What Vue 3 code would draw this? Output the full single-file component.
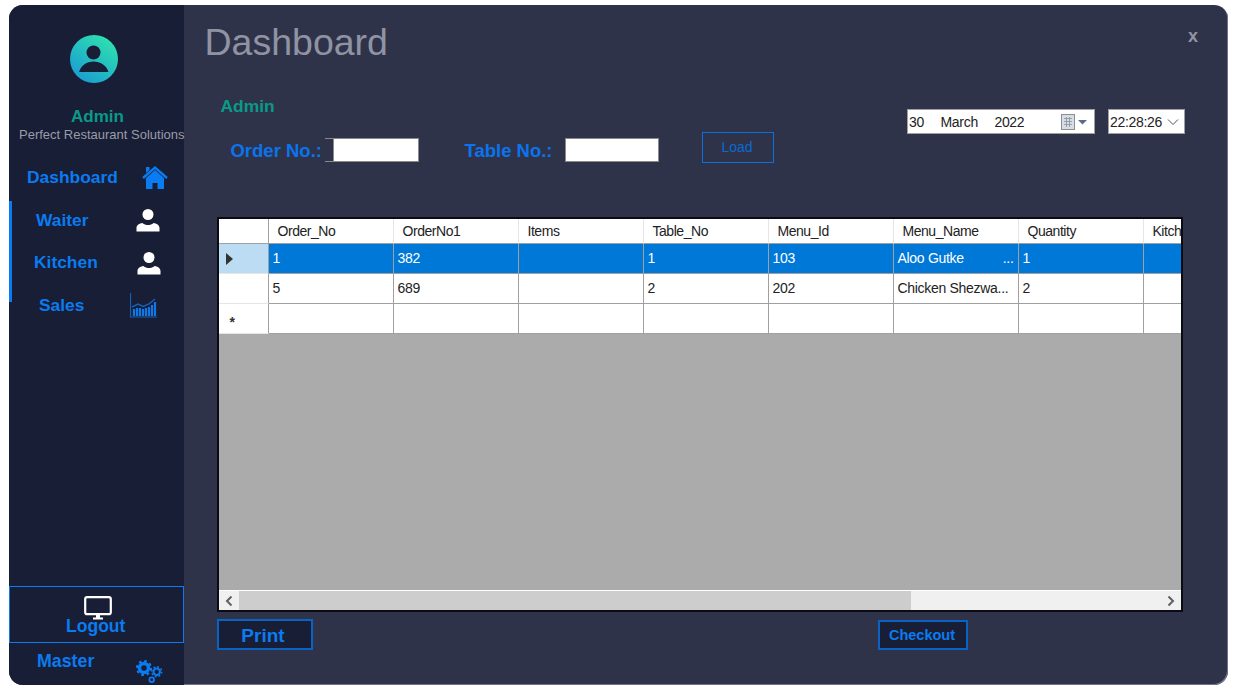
<template>
  <div class="window">
    <aside class="sidebar">
      <svg class="avatar" viewBox="0 0 48 48">
        <defs>
          <linearGradient id="avatarFill" x1="0.85" y1="0.05" x2="0.2" y2="0.95">
            <stop offset="0" stop-color="#30e2ae" />
            <stop offset="1" stop-color="#1a9dd2" />
          </linearGradient>
        </defs>
        <circle cx="24" cy="24" r="24" fill="url(#avatarFill)" />
        <circle cx="23.500" cy="17.500" r="7" fill="#181e35" />
        <path d="M9 37c2-6.500 8-10.500 14.500-10.500S36.500 30.500 38.500 37z" fill="#181e35" />
      </svg>
      <div class="who">Admin</div>
      <div class="company">Perfect Restaurant Solutions</div>

      <div class="nav-row first">
        <span class="nav-label">Dashboard</span>
        <svg class="home" viewBox="0 0 26 24">
          <path d="M1 13 13 2.500 25 13" fill="none" stroke="#0a7bf0" stroke-width="2.400" />
          <path d="M4 2h3.500v3l-3.500 3z" fill="#0a7bf0" />
          <path d="M13 5 4 13v11h6.500v-6h5v6H22V13z" fill="#0a7bf0" />
        </svg>
      </div>
      <div class="nav-group">
        <div class="nav-row waiter">
          <span class="nav-label">Waiter</span>
          <svg class="person" viewBox="0 0 24 24">
            <circle cx="12" cy="6.500" r="5.500" fill="#fff" />
            <path d="M0.500 23.500V20c0-3 3-4.500 6-5 1.500 1.500 3.500 2 5.500 2s4-0.500 5.500-2c3 0.500 6 2 6 5v3.500z" fill="#fff" />
          </svg>
        </div>
        <div class="nav-row kitchen">
          <span class="nav-label">Kitchen</span>
          <svg class="person" viewBox="0 0 24 24">
            <circle cx="12" cy="6.500" r="5.500" fill="#fff" />
            <path d="M0.500 23.500V20c0-3 3-4.500 6-5 1.500 1.500 3.500 2 5.500 2s4-0.500 5.500-2c3 0.500 6 2 6 5v3.500z" fill="#fff" />
          </svg>
        </div>
        <div class="nav-row sales">
          <span class="nav-label">Sales</span>
          <svg class="chart" viewBox="0 0 27 25">
            <path d="M0.500 0v24H27" fill="none" stroke="#1560b8" stroke-width="1.200" />
            <path d="M2 14l6-3 5 2.500 6-2.500 6-5" fill="none" stroke="#1560b8" stroke-width="1.400" />
            <path d="M4 23v-7M7 23v-8M10 23v-8M13 23v-7M16 23v-8M19 23v-9M22 23v-11M25 23v-14" stroke="#0f78e8" stroke-width="2.200" />
          </svg>
        </div>
      </div>

      <div class="logout">
        <svg class="monitor" viewBox="0 0 28 24">
          <rect x="1.200" y="1.200" width="25.600" height="17" rx="2" fill="none" stroke="#fff" stroke-width="2.200" />
          <path d="M12 19h4v2.500h-4zM9 21.500h10v2H9z" fill="#fff" />
        </svg>
        <span class="nav-label">Logout</span>
      </div>
      <div class="nav-row master">
        <span class="nav-label">Master</span>
        <svg class="gears" viewBox="0 0 27 24">
          <g fill="none" stroke="#0a7bf0">
            <circle cx="8" cy="8" r="4.500" stroke-width="3.500" />
            <circle cx="8" cy="8" r="7" stroke-width="2.200" stroke-dasharray="2.700 2.800" />
            <circle cx="20.700" cy="11.700" r="3.200" stroke-width="2" />
            <circle cx="20.700" cy="11.700" r="5" stroke-width="1.500" stroke-dasharray="1.900 2" />
            <circle cx="15.700" cy="19.700" r="2.300" stroke-width="1.800" />
          </g>
        </svg>
      </div>
    </aside>

    <main class="main">
      <header class="top">
        <h1>Dashboard</h1>
        <span class="close">x</span>
      </header>

      <section class="filters">
        <div class="filters-left">
          <div class="user">Admin</div>
          <div class="order-row">
            <label class="field-label order-label">Order No.:</label>
            <div class="field order-field"><input type="text" /></div>
            <label class="field-label table-label">Table No.:</label>
            <div class="field table-field"><input type="text" /></div>
            <button class="load">Load</button>
          </div>
        </div>
        <div class="filters-right">
          <div class="picker date">
            <span>30</span><span>March</span><span>2022</span>
            <svg class="cal" viewBox="0 0 26 16">
              <rect x="0.500" y="0.500" width="13" height="15" fill="#d8dde3" stroke="#8a8f96" />
              <path d="M3 4.500h8M3 7.500h8M3 10.500h8M5.500 3v10M8.500 3v10" stroke="#8f9aa8" stroke-width="0.900" />
              <path d="M17 6h9l-4.500 4.500z" fill="#5a6c8c" />
            </svg>
          </div>
          <div class="picker time">
            <span>22:28:26</span>
            <svg class="chev" viewBox="0 0 12 8"><path d="M1 1.500l5 5 5-5" fill="none" stroke="#555" /></svg>
          </div>
        </div>
      </section>

      <section class="grid">
        <div class="grid-view">
          <table>
            <colgroup>
              <col class="rowhead-col" />
              <col v-for="c in columns" :key="c" class="data-col" />
            </colgroup>
            <thead>
              <tr>
                <th class="rowhead"></th>
                <th v-for="c in columns" :key="c">{{ c }}</th>
              </tr>
            </thead>
            <tbody>
              <tr class="selected">
                <td class="rowhead"><span class="arrow"></span></td>
                <td v-for="(v, i) in rows[0]" :key="i">
                  <div v-if="i === 5" class="clip"><span>{{ v }}</span><span>...</span></div>
                  <template v-else>{{ v }}</template>
                </td>
              </tr>
              <tr>
                <td class="rowhead"></td>
                <td v-for="(v, i) in rows[1]" :key="i">{{ v }}</td>
              </tr>
              <tr>
                <td class="rowhead"><span class="star">*</span></td>
                <td v-for="c in columns" :key="c"></td>
              </tr>
            </tbody>
          </table>
        </div>
        <div class="scrollbar">
          <span class="scroll-btn">
            <svg viewBox="0 0 10 12"><path d="M7.500 1.500 3 6l4.500 4.500" fill="none" stroke="#606060" stroke-width="2" /></svg>
          </span>
          <span class="thumb"></span>
          <span class="scroll-btn end">
            <svg viewBox="0 0 10 12"><path d="M2.500 1.500 7 6l-4.500 4.500" fill="none" stroke="#606060" stroke-width="2" /></svg>
          </span>
        </div>
      </section>

      <footer class="actions">
        <button class="print">Print</button>
        <button class="checkout">Checkout</button>
      </footer>
    </main>
  </div>
</template>

<script setup>
const columns = ['Order_No', 'OrderNo1', 'Items', 'Table_No', 'Menu_Id', 'Menu_Name', 'Quantity', 'Kitchen']
const rows = [
  ['1', '382', '', '1', '103', 'Aloo Gutke', '1', ''],
  ['5', '689', '', '2', '202', 'Chicken Shezwa...', '2', '']
]
</script>

<style>
html, body { background: #fff; }
</style>

<style scoped>
.window {
  display: flex;
  width: 1219px;
  height: 680px;
  margin: 5px 0 0 9px;
  border-radius: 14px;
  overflow: hidden;
  background: #2f3349;
  font-family: "Liberation Sans", Arial, sans-serif;
  box-shadow: inset -1px -1px 0 #70748a;
}
.sidebar {
  display: flex;
  flex-direction: column;
  flex: 0 0 175px;
  padding-top: 30px;
  background: #181e35;
  box-sizing: border-box;
}
.avatar {
  width: 48px;
  height: 48px;
  margin-left: 61px;
}
.who {
  margin-top: 23px;
  margin-left: 62px;
  font-size: 17px;
  line-height: 22px;
  font-weight: 700;
  color: #0a9a88;
}
.company {
  margin-left: 10px;
  margin-top: -1px;
  font-size: 13px;
  line-height: 16px;
  color: #9a9ca8;
  white-space: nowrap;
}
.nav-row {
  display: flex;
  align-items: center;
  justify-content: space-between;
  height: 42.5px;
  box-sizing: border-box;
}
.nav-label {
  font-size: 17.400px;
  font-weight: 700;
  color: #0a7bf0;
}
.first {
  margin-top: 13px;
  height: 42px;
  padding: 0 16px 0 18px;
  margin-bottom: 1px;
}
.nav-group {
  position: relative;
}
.nav-group::before {
  content: "";
  position: absolute;
  left: 0;
  top: 2px;
  width: 3px;
  height: 101px;
  background: #0a7bf0;
}
.waiter { padding: 0 24px 0 27px; }
.kitchen { padding: 0 23px 0 25px; }
.sales { padding: 0 27px 0 30px; }
.home { width: 26px; height: 24px; }
.person { width: 24px; height: 24px; }
.chart { width: 27px; height: 25px; }
.logout {
  display: flex;
  flex-direction: column;
  align-items: center;
  height: 57px;
  margin-top: auto;
  padding-top: 9px;
  box-sizing: border-box;
  border: 1px solid #0a7bf0;
}
.logout .nav-label { margin: -5px 2px 0 0; line-height: 22px; font-size: 17.500px; }
.monitor { width: 28px; height: 24px; flex: none; margin-left: 3px; }
.master {
  height: 42px;
  padding: 0 21px 0 28px;
  align-items: flex-start;
}
.master .nav-label { margin-top: 8px; font-size: 17.800px; }
.gears { width: 27px; height: 24px; margin-top: 17px; overflow: visible; }

.main {
  flex: 1;
  display: flex;
  flex-direction: column;
  padding: 0 45px 0 33px;
  min-width: 0;
}
.top {
  display: flex;
  justify-content: space-between;
  height: 76px;
  margin-left: -13px;
  margin-right: -15px;
}
h1 {
  margin: 14px 0 0;
  font-size: 37.500px;
  line-height: 46px;
  font-weight: 400;
  color: #8f93a3;
}
.close {
  margin-top: 20px;
  font-size: 18px;
  line-height: 22px;
  font-weight: 700;
  color: #8f93a3;
}
.filters {
  display: flex;
  justify-content: space-between;
  height: 136px;
}
.user {
  margin-left: 3px;
  margin-top: 14px;
  font-size: 17.400px;
  line-height: 22px;
  font-weight: 700;
  color: #0a9a88;
}
.order-row {
  display: flex;
  align-items: center;
  margin-top: 15px;
  height: 31px;
}
.field-label {
  margin-top: 6px;
  margin-left: -1px;
  font-size: 18.500px;
  font-weight: 700;
  color: #0a74ee;
  white-space: nowrap;
}
.order-label { width: 95px; margin-left: 13px; }
.table-label { width: 101px; margin-left: 45px; }
.field {
  display: flex;
  width: 94px;
  height: 24px;
  margin-top: 5px;
  box-sizing: border-box;
  border: 1px solid #8a8a8a;
}
.order-field {
  padding-left: 8px;
  border-left: 0;
}
.field input {
  width: 100%;
  min-width: 0;
  padding: 0;
  border: 0;
  background: #fff;
}
.order-field input { border-left: 1px solid #8a8a8a; }
.load {
  width: 72px;
  height: 31px;
  margin-left: 43px;
  padding: 0 3px 2px 0;
  border: 1px solid #0a70e0;
  background: transparent;
  color: #0a6ad0;
  font-family: inherit;
  font-size: 14px;
}
.filters-right {
  display: flex;
  gap: 13px;
  margin-top: 28px;
  margin-right: -2px;
}
.picker {
  display: flex;
  align-items: center;
  height: 25px;
  box-sizing: border-box;
  padding-left: 1px;
  background: #fff;
  border: 1px solid #a0a0a0;
  font-size: 14px;
  letter-spacing: -0.3px;
  color: #222;
}
.date { width: 188px; gap: 16.500px; }
.time { width: 77px; padding-left: 1px; }
.cal { width: 26px; height: 16px; margin-left: auto; margin-right: 7px; }
.chev { width: 12px; height: 8px; margin-left: 5px; }

.grid {
  display: flex;
  flex-direction: column;
  width: 966px;
  height: 395px;
  box-sizing: border-box;
  border: 2px solid #0b0b12;
  background: #ababab;
}
.grid-view {
  flex: 1;
  overflow: hidden;
  min-height: 0;
}
table {
  width: 925px;
  table-layout: fixed;
  border-collapse: separate;
  border-spacing: 0;
  font-size: 14px;
  letter-spacing: -0.3px;
  color: #222;
}
.rowhead-col { width: 50px; }
.data-col { width: 125px; }
th {
  height: 25px;
  padding: 0 0 0 8px;
  box-sizing: border-box;
  background: #fff;
  font-weight: 400;
  letter-spacing: -0.45px;
  text-align: left;
  white-space: nowrap;
  overflow: hidden;
  border-right: 1px solid #e6e6e6;
  border-bottom: 1px solid #a0a0a0;
}
td {
  height: 30px;
  padding: 0 3px 2px;
  box-sizing: border-box;
  background: #fff;
  white-space: nowrap;
  overflow: hidden;
  border-right: 1px solid #a0a0a0;
  border-bottom: 1px solid #a0a0a0;
}
td.rowhead, th.rowhead {
  border-right: 1px solid #a0a0a0;
  border-bottom: 1px solid #e6e6e6;
  text-align: left;
  padding: 0 0 0 7px;
}
th.rowhead { border-bottom-color: #a0a0a0; }
.selected td {
  background: #0078d7;
  color: #fff;
}
.selected td.rowhead { background: #bcdcf4; }
.clip { display: flex; justify-content: space-between; padding-right: 2px; }
.arrow {
  display: block;
  width: 0;
  border-left: 7px solid #333;
  border-top: 6px solid transparent;
  border-bottom: 6px solid transparent;
}
.star {
  display: block;
  margin: 6px 0 0 3px;
  font-size: 14px;
  font-weight: 700;
  line-height: 16px;
  color: #333;
}
.scrollbar {
  display: flex;
  flex: none;
  height: 20px;
  border-top: 1px solid #fff;
  box-sizing: border-box;
  background: #f0f0f0;
}
.scroll-btn {
  display: flex;
  align-items: center;
  justify-content: center;
  flex: 0 0 20px;
}
.scroll-btn svg { width: 10px; height: 12px; }
.scroll-btn.end { margin-left: auto; }
.thumb {
  flex: 0 0 672px;
  background: #cdcdcd;
}
.actions {
  display: flex;
  align-items: center;
  margin-top: 7px;
}
.actions button {
  box-sizing: border-box;
  background: #181e35;
  border: 2px solid #0a62c4;
  color: #0a7bf0;
  font-family: inherit;
  font-weight: 700;
}
.print { width: 96px; height: 31px; font-size: 19px; padding: 3px 5px 0 0; }
.checkout { width: 90px; height: 30px; margin-left: 565px; font-size: 14.500px; padding: 0 3px 0 0; }
</style>
